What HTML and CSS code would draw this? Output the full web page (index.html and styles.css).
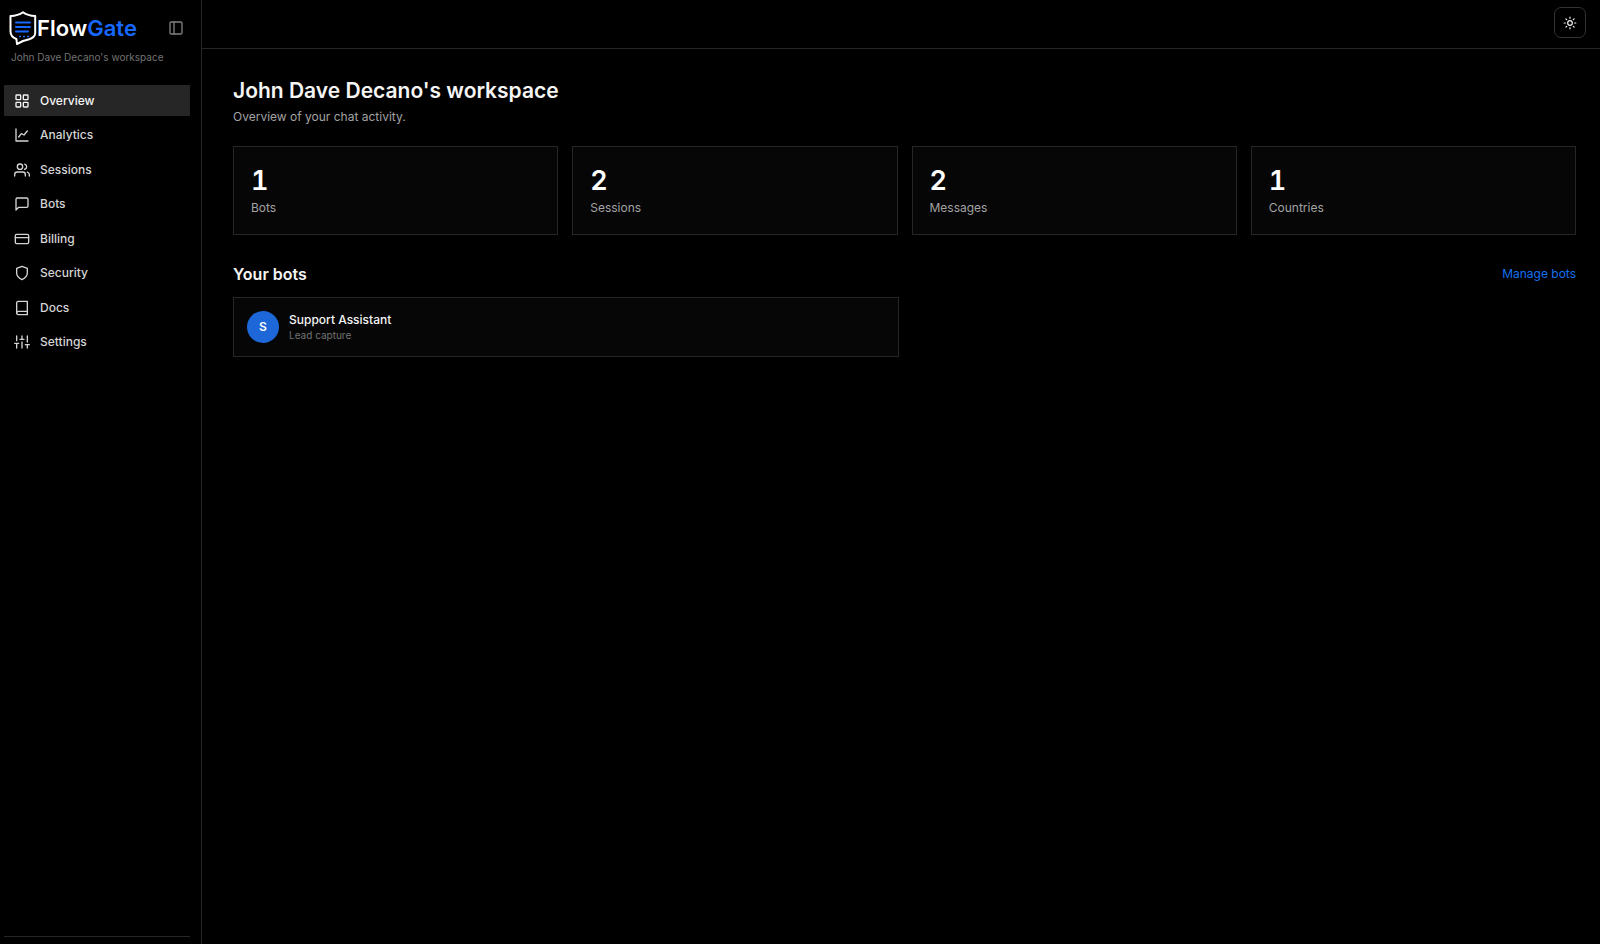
FILE: index.html
```html
<!DOCTYPE html>
<html lang="en">

<head>
    <meta charset="UTF-8">
    <meta name="viewport" content="width=device-width, initial-scale=1.0">
    <title>FlowGate - Overview</title>
    <link rel="stylesheet" href="styles.css">
</head>

<body>
    <aside class="sidebar">
        <div class="sidebar-head">
            <a href="#" class="logo">
                <svg class="logo-mark" viewBox="0 0 28 34" fill="none">
                    <path d="M14 1.200C17 3.400 21 4.800 26.200 5v17c0 3-2.200 5-6 6.300L14 30l-6 3-.6-5C3.500 26.500 1.500 24 1.500 20.500V5C7 4.800 11 3.400 14 1.200z" stroke="#fff" stroke-width="2" stroke-linejoin="round"/>
                    <path d="M7 11.500h14M7 16h14M7 20.500h12" stroke="#1668ff" stroke-width="2" stroke-linecap="round"/>
                    <path d="M10 25.500h2M14 25.500h2M18 25.500h2" stroke="#1668ff" stroke-width="1.500"/>
                </svg>
                <span class="logo-text">Flow<span>Gate</span></span>
            </a>
            <button type="button" class="collapse" aria-label="Collapse sidebar">
                <svg class="icon" viewBox="0 0 24 24"><rect x="3" y="3" width="18" height="18" rx="2"/><path d="M9 3v18"/></svg>
            </button>
        </div>
        <p class="workspace">John Dave Decano's workspace</p>

        <nav>
            <ul class="menu">
                <li><a href="#" class="active">
                    <svg class="icon" viewBox="0 0 24 24"><rect x="3" y="3" width="7" height="7" rx="1"/><rect x="14" y="3" width="7" height="7" rx="1"/><rect x="14" y="14" width="7" height="7" rx="1"/><rect x="3" y="14" width="7" height="7" rx="1"/></svg>
                    Overview</a></li>
                <li><a href="#">
                    <svg class="icon" viewBox="0 0 24 24"><path d="M3 3v18h18"/><path d="m7 15 4-5 4 2 5-6"/></svg>
                    Analytics</a></li>
                <li><a href="#">
                    <svg class="icon" viewBox="0 0 24 24"><path d="M17 21v-2a4 4 0 0 0-4-4H5a4 4 0 0 0-4 4v2"/><circle cx="9" cy="7" r="4"/><path d="M23 21v-2a4 4 0 0 0-3-3.870"/><path d="M16 3.130a4 4 0 0 1 0 7.750"/></svg>
                    Sessions</a></li>
                <li><a href="#">
                    <svg class="icon" viewBox="0 0 24 24"><path d="M21 15a2 2 0 0 1-2 2H7l-4 4V5a2 2 0 0 1 2-2h14a2 2 0 0 1 2 2z"/></svg>
                    Bots</a></li>
                <li><a href="#">
                    <svg class="icon" viewBox="0 0 24 24"><rect x="2" y="5" width="20" height="14" rx="2"/><path d="M2 10h20"/></svg>
                    Billing</a></li>
                <li><a href="#">
                    <svg class="icon" viewBox="0 0 24 24"><path d="M12 22s8-4 8-10V5l-8-3-8 3v7c0 6 8 10 8 10z"/></svg>
                    Security</a></li>
                <li><a href="#">
                    <svg class="icon" viewBox="0 0 24 24"><path d="M4 19.500A2.500 2.500 0 0 1 6.500 17H20"/><path d="M6.500 2H20v20H6.500A2.500 2.500 0 0 1 4 19.500v-15A2.500 2.500 0 0 1 6.500 2z"/></svg>
                    Docs</a></li>
                <li><a href="#">
                    <svg class="icon" viewBox="0 0 24 24"><path d="M4 21v-7M4 10V3M12 21v-9M12 8V3M20 21v-5M20 12V3M1 14h6M9 8h6M17 16h6"/></svg>
                    Settings</a></li>
            </ul>
        </nav>
        <div class="sidebar-foot"></div>
    </aside>

    <div class="page">
        <header class="topbar">
            <button type="button" class="theme" aria-label="Toggle theme">
                <svg class="icon" viewBox="0 0 24 24"><circle cx="12" cy="12" r="4"/><path d="M12 2v2M12 20v2M4.930 4.930l1.410 1.410M17.660 17.660l1.410 1.410M2 12h2M20 12h2M6.340 17.660l-1.410 1.410M19.070 4.930l-1.410 1.410"/></svg>
            </button>
        </header>

        <main>
            <h1>John Dave Decano's workspace</h1>
            <p class="subtitle">Overview of your chat activity.</p>

            <section class="stats">
                <div class="card stat"><strong>1</strong><span>Bots</span></div>
                <div class="card stat"><strong>2</strong><span>Sessions</span></div>
                <div class="card stat"><strong>2</strong><span>Messages</span></div>
                <div class="card stat"><strong>1</strong><span>Countries</span></div>
            </section>

            <section>
                <div class="section-head">
                    <h2>Your bots</h2>
                    <a href="#">Manage bots</a>
                </div>
                <div class="bots">
                    <a href="#" class="card bot">
                        <span class="avatar">S</span>
                        <span class="bot-info">
                            <span class="bot-name">Support Assistant</span>
                            <span class="bot-type">Lead capture</span>
                        </span>
                    </a>
                </div>
            </section>
        </main>
    </div>
</body>

</html>
```
FILE: styles.css
```css
* {
    box-sizing: border-box;
}

body {
    margin: 0;
    min-height: 100vh;
    display: flex;
    background: #000;
    color: #f5f5f5;
    font-family: Inter, "Liberation Sans", sans-serif;
    font-size: 12px;
    line-height: 18px;
}

h1, h2, p, ul {
    margin: 0;
    padding: 0;
}

a {
    color: inherit;
    text-decoration: none;
}

button {
    display: flex;
    align-items: center;
    justify-content: center;
    padding: 0;
    background: none;
    border: none;
    color: inherit;
    cursor: pointer;
}

.icon {
    width: 16px;
    height: 16px;
    flex-shrink: 0;
    fill: none;
    stroke: currentColor;
    stroke-width: 2;
    stroke-linecap: round;
    stroke-linejoin: round;
}

/* Sidebar */
.sidebar {
    width: 202px;
    flex-shrink: 0;
    display: flex;
    flex-direction: column;
    padding: 11px 11px 7px 4px;
    border-right: 1px solid #262626;
}

.sidebar-head {
    display: flex;
    align-items: center;
    justify-content: space-between;
    padding: 0 6px 0 5px;
}

.logo {
    display: flex;
    align-items: center;
}

.logo-mark {
    width: 28px;
    height: 34px;
}

.logo-text {
    font-size: 22px;
    font-weight: 600;
    line-height: 34px;
    color: #fff;
}

.logo-text span {
    color: #1668ff;
}

.collapse {
    width: 16px;
    height: 16px;
    color: #808080;
}

.workspace {
    padding: 4px 7px 0;
    margin-bottom: 20px;
    font-size: 10px;
    line-height: 16px;
    color: #737373;
}

.menu {
    display: flex;
    flex-direction: column;
    justify-content: space-between;
    height: 273px;
    list-style: none;
}

.menu a {
    display: flex;
    align-items: center;
    gap: 10px;
    height: 31px;
    padding: 0 10px;
    color: #d4d4d4;
    font-weight: 500;
}

.menu a.active {
    background: #262626;
    color: #f5f5f5;
}

.sidebar-foot {
    margin-top: auto;
    border-top: 1px solid #262626;
}

/* Main area */
.page {
    flex: 1;
    min-width: 0;
}

.topbar {
    display: flex;
    justify-content: flex-end;
    align-items: flex-start;
    height: 49px;
    padding: 7px 14px;
    border-bottom: 1px solid #262626;
}

.theme {
    width: 32px;
    height: 31px;
    border: 1px solid #333;
    border-radius: 7px;
}

.theme .icon {
    width: 14px;
    height: 14px;
}

main {
    padding: 28px 24px 28px 31px;
}

h1 {
    font-size: 21px;
    font-weight: 600;
    line-height: 28px;
}

.subtitle {
    margin-top: 3px;
    color: #a3a3a3;
}

.card {
    background: #060606;
    border: 1px solid #262626;
}

.stats {
    display: grid;
    grid-template-columns: repeat(4, 1fr);
    gap: 14px;
    margin: 20px 0 28px;
}

.stat {
    display: flex;
    flex-direction: column;
    gap: 2px;
    padding: 17px;
    color: #a3a3a3;
}

.stat strong {
    font-size: 27px;
    font-weight: 600;
    line-height: 33px;
    color: #fff;
    font-variant-numeric: tabular-nums;
}

.section-head {
    display: flex;
    align-items: center;
    justify-content: space-between;
    margin-bottom: 12px;
}

.section-head h2 {
    font-size: 16px;
    font-weight: 600;
    line-height: 22px;
}

.section-head a {
    color: #1570ef;
}

.bots {
    display: grid;
    grid-template-columns: repeat(2, 1fr);
    gap: 11px;
}

.bot {
    display: flex;
    align-items: center;
    gap: 10px;
    padding: 13px;
}

.avatar {
    width: 32px;
    height: 32px;
    border-radius: 50%;
    background: #1d67d8;
    color: #fff;
    font-weight: 600;
    line-height: 32px;
    text-align: center;
}

.bot-info {
    display: flex;
    flex-direction: column;
}

.bot-name {
    font-weight: 500;
    line-height: 16px;
}

.bot-type {
    font-size: 10px;
    line-height: 14px;
    color: #737373;
}

@media (max-width: 800px) {
    .stats {
        grid-template-columns: repeat(2, 1fr);
    }

    .bots {
        grid-template-columns: 1fr;
    }
}
```
